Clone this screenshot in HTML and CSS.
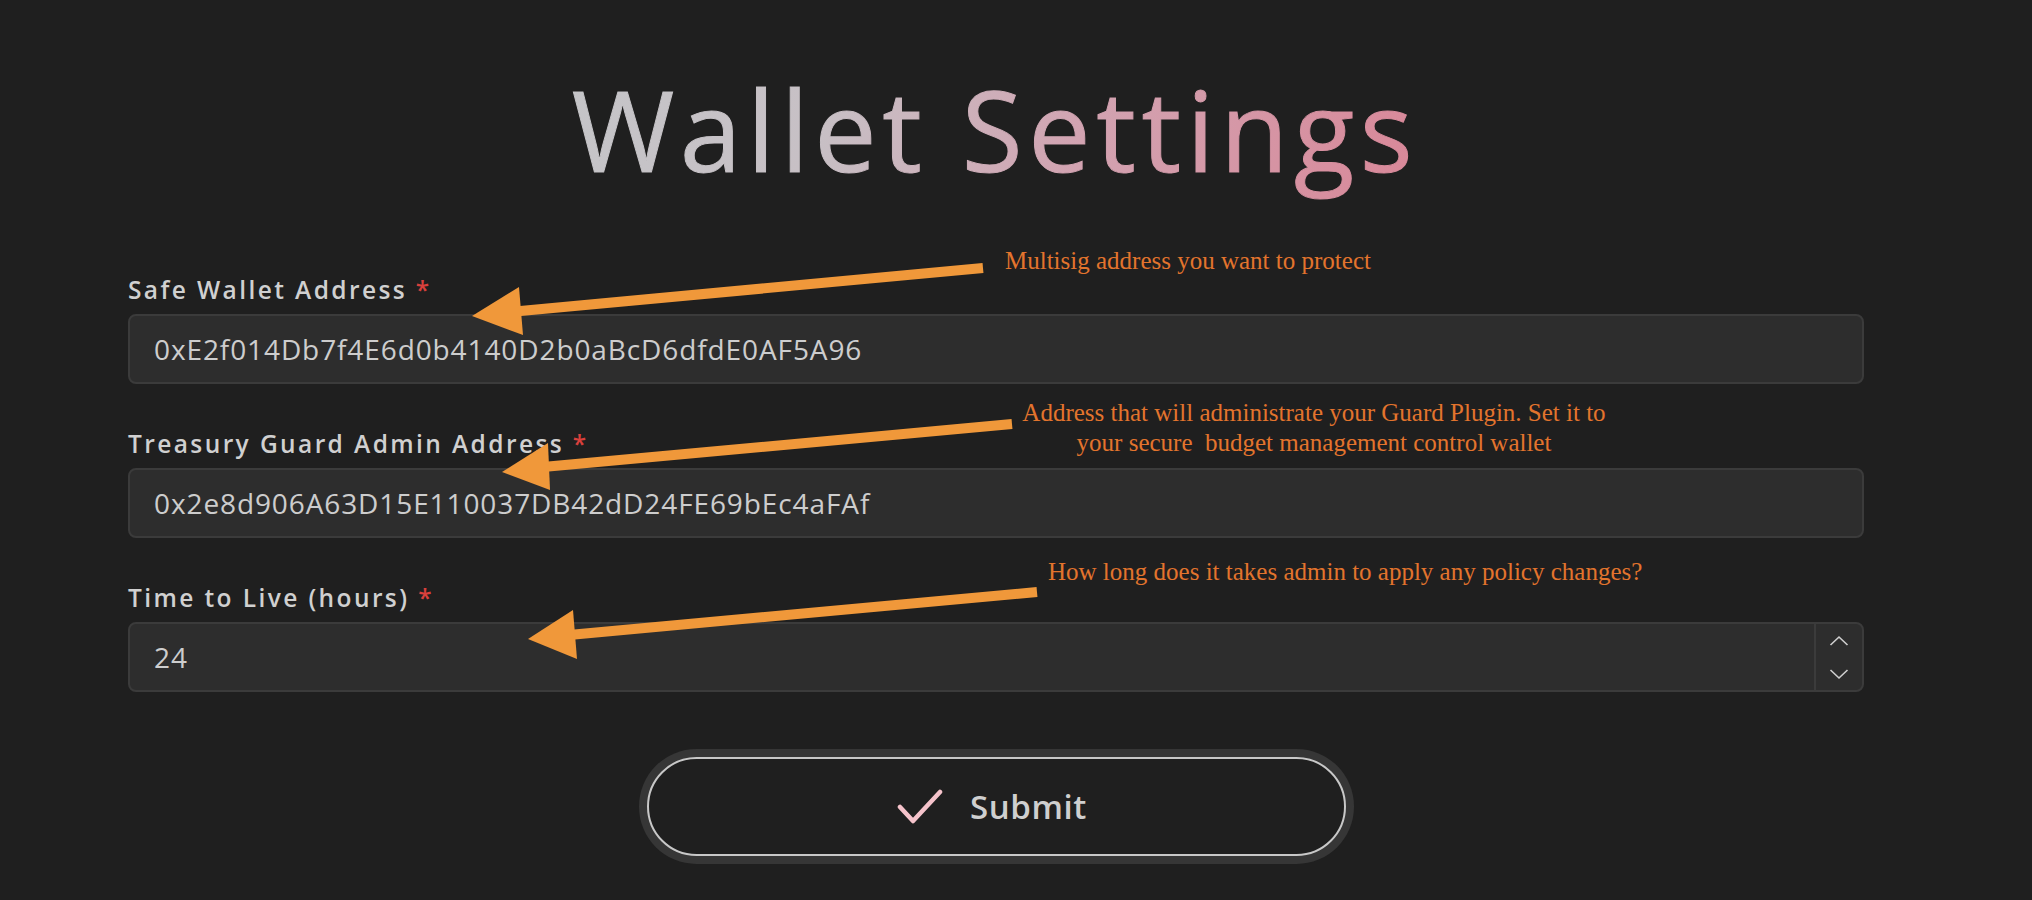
FILE: index.html
```html
<!DOCTYPE html>
<html lang="en">
<head>
<meta charset="utf-8">
<title>Wallet Settings</title>
<link rel="stylesheet" href="styles.css">
</head>
<body>
<div class="screen">
  <main class="page">
    <h1 class="title"><span class="title-text">Wallet Settings</span></h1>
    <form class="form">
      <div class="field">
        <label class="label">Safe Wallet Address <span class="req">*</span></label>
        <div class="box"><input class="input" type="text" value="0xE2f014Db7f4E6d0b4140D2b0aBcD6dfdE0AF5A96"></div>
      </div>
      <div class="field">
        <label class="label">Treasury Guard Admin Address <span class="req">*</span></label>
        <div class="box"><input class="input" type="text" value="0x2e8d906A63D15E110037DB42dD24FE69bEc4aFAf"></div>
      </div>
      <div class="field">
        <label class="label">Time to Live (hours) <span class="req">*</span></label>
        <div class="box">
          <input class="input" type="text" value="24">
          <div class="spinner">
            <span class="spin-btn"><svg width="20" height="12" viewBox="0 0 20 12"><path d="M1.5 10 L10 2 L18.5 10" fill="none" stroke="#cfcfcf" stroke-width="1.6"/></svg></span>
            <span class="spin-btn"><svg width="20" height="12" viewBox="0 0 20 12"><path d="M1.5 2 L10 10 L18.5 2" fill="none" stroke="#cfcfcf" stroke-width="1.6"/></svg></span>
          </div>
        </div>
      </div>
      <div class="actions">
        <button class="submit" type="button">
          <svg class="check" width="48" height="36" viewBox="0 0 48 36"><path d="M4 19 L17 33 L44 4" fill="none" stroke="#f5c3cb" stroke-width="4.5" stroke-linecap="round" stroke-linejoin="round"/></svg>
          <span>Submit</span>
        </button>
      </div>
    </form>
  </main>

  <svg class="arrows" width="2032" height="900" viewBox="0 0 2032 900">
    <g fill="#f0983a" stroke="#f0983a">
      <line x1="983" y1="268" x2="515" y2="311.5" stroke-width="10"/>
      <polygon points="472,316 519,287 523,335" stroke="none"/>
      <line x1="1012" y1="424" x2="543" y2="467" stroke-width="10"/>
      <polygon points="502,472 548,443 550,490" stroke="none"/>
      <line x1="1037" y1="592" x2="569" y2="635" stroke-width="10"/>
      <polygon points="528,639 573,610 577,659" stroke="none"/>
    </g>
  </svg>
  <div class="note note-1">Multisig address you want to protect</div>
  <div class="note note-2">Address that will administrate your Guard Plugin. Set it to
your secure  budget management control wallet</div>
  <div class="note note-3">How long does it takes admin to apply any policy changes?</div>
</div>
</body>
</html>
```

FILE: styles.css
```css
* { box-sizing: border-box; }

html, body {
  margin: 0;
  padding: 0;
  background: #1f1f1f;
}

body {
  font-family: "Open Sans", "Noto Sans", sans-serif;
  color: #d2d2d2;
  width: 2032px;
  height: 900px;
  overflow: hidden;
}

.screen {
  position: relative;
  width: 2032px;
  height: 900px;
}

.page {
  width: 1736px;
  margin-left: 128px;
  display: flex;
  flex-direction: column;
}

.title {
  margin: 54px 0 0 0;
  height: 151px;
  font-size: 111px;
  line-height: 151px;
  font-weight: 400;
  text-align: center;
  letter-spacing: 5.6px;
}

.title-text {
  display: inline-block;
  background: linear-gradient(105deg, #c5c5c8 0%, #c7c0c5 30%, #d2a3b1 60%, #d98798 100%);
  -webkit-background-clip: text;
  background-clip: text;
  color: transparent;
  padding-right: 2px;
  -webkit-text-stroke: 1px transparent;
}

.form {
  margin-top: 69px;
  display: flex;
  flex-direction: column;
  gap: 44px;
}

.field {
  display: flex;
  flex-direction: column;
  gap: 8px;
}

.label {
  font-size: 24.5px;
  line-height: 32px;
  height: 32px;
  font-weight: 600;
  color: #d0d0d0;
  letter-spacing: 2.4px;
}

.req {
  color: #d9403c;
  letter-spacing: 0;
}

.box {
  height: 70px;
  background: #2d2d2d;
  border: 2px solid #3b3b3b;
  border-radius: 8px;
  display: flex;
  align-items: stretch;
}

.input {
  flex: 1;
  min-width: 0;
  background: transparent;
  border: 0;
  outline: none;
  padding: 0 0 0 24px;
  font-family: "Open Sans", "Noto Sans", sans-serif;
  font-size: 28px;
  font-weight: 400;
  color: #cdcdcd;
  letter-spacing: 0.9px;
}

.spinner {
  width: 48px;
  border-left: 2px solid #3b3b3b;
  display: flex;
  flex-direction: column;
}

.spin-btn {
  flex: 1;
  display: flex;
  align-items: center;
  justify-content: center;
}

.actions {
  margin-top: 21px;
  display: flex;
  justify-content: center;
}

.submit {
  width: 699px;
  height: 99px;
  border: 2px solid #c8c8c8;
  border-radius: 50px;
  background: #1f1f1f;
  box-shadow: 0 0 0 8px #363636;
  display: flex;
  align-items: center;
  justify-content: center;
  gap: 26px;
  font-family: "Open Sans", "Noto Sans", sans-serif;
  font-size: 33px;
  font-weight: 600;
  letter-spacing: 0.6px;
  color: #cfcfcf;
  padding: 0 9px 0 0;
}

.check {
  display: block;
  margin-top: -2px;
}

.arrows {
  position: absolute;
  left: 0;
  top: 0;
  pointer-events: none;
}

.note {
  position: absolute;
  font-family: "Liberation Serif", "DejaVu Serif", serif;
  font-size: 25px;
  line-height: 30px;
  color: #e3742d;
  white-space: pre;
}

.note-1 { left: 1005px; top: 246px; }
.note-2 { left: 964px; top: 398px; width: 700px; text-align: center; }
.note-3 { left: 1048px; top: 557px; }
```
